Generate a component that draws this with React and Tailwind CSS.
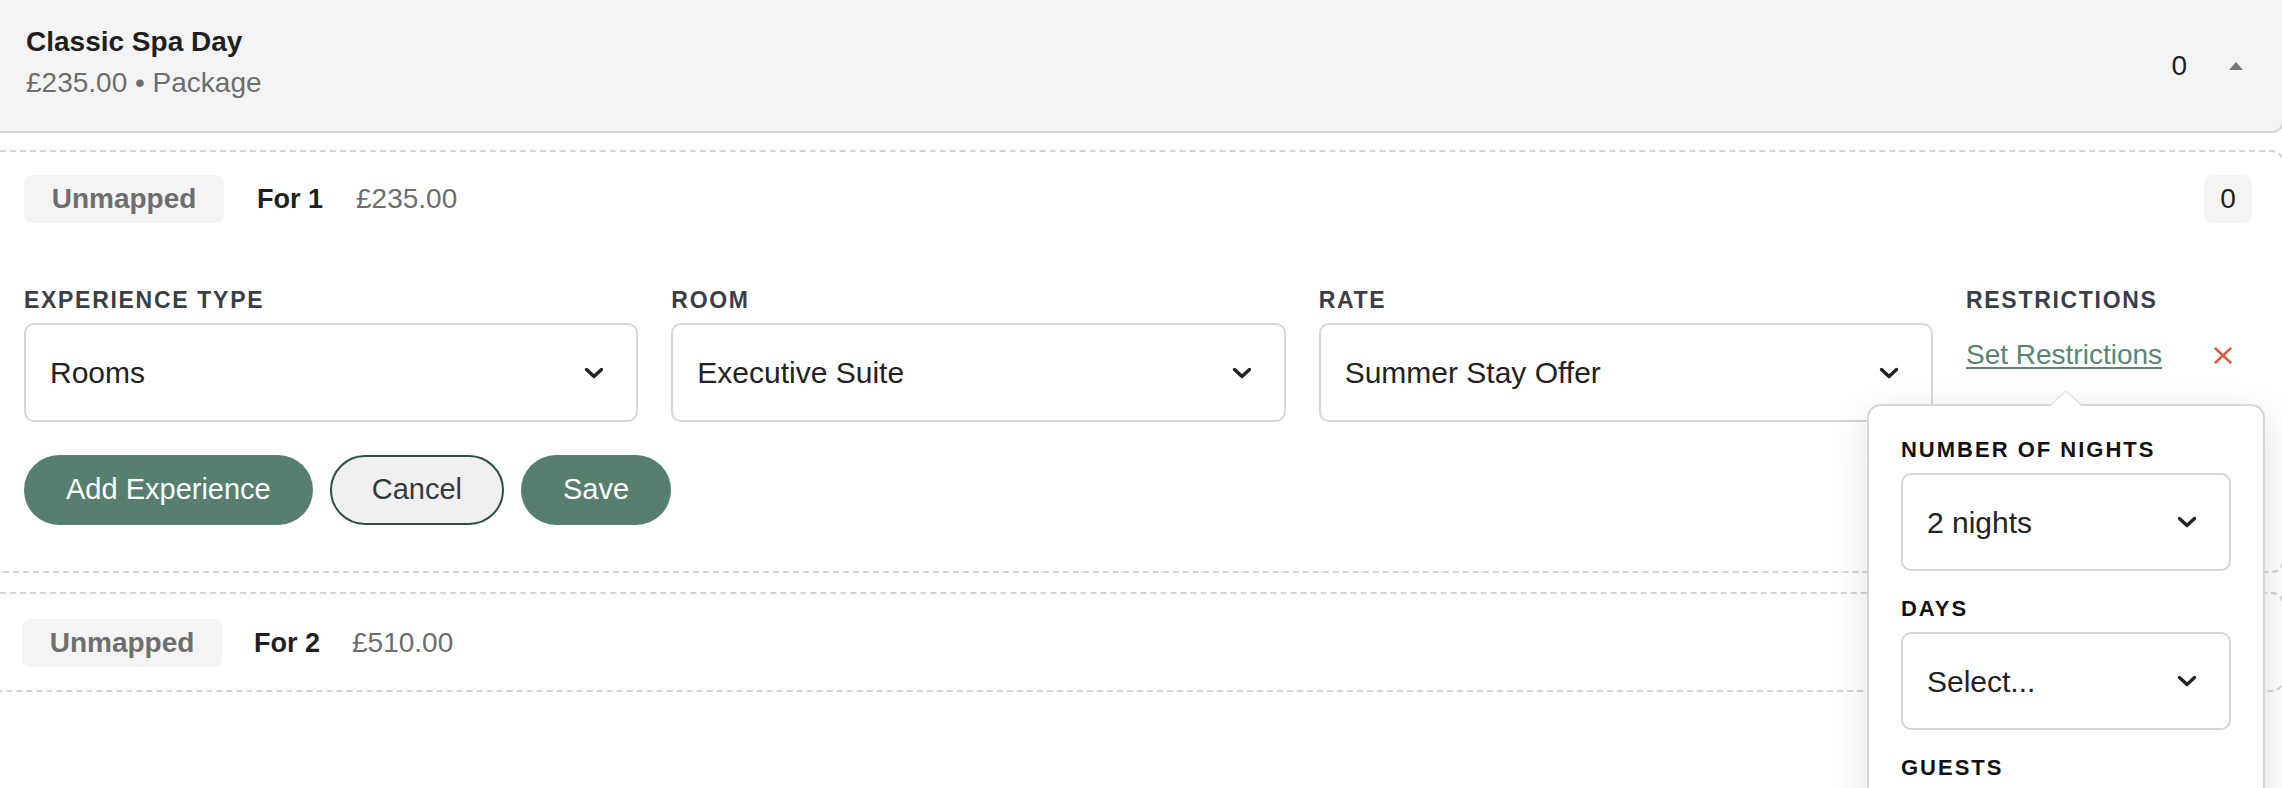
import React from 'react';

const Chevron = () => (
    <svg width="20" height="12" viewBox="0 0 20 12" fill="none">
        <path d="M2.5 2.5 L10 9.5 L17.5 2.5" stroke="#222" strokeWidth="3.4" strokeLinecap="round" strokeLinejoin="round" />
    </svg>
);

const CloseIcon = () => (
    <svg width="18" height="17" viewBox="0 0 18 17" fill="none">
        <path d="M1.5 1.5 L16.5 15.5 M16.5 1.5 L1.5 15.5" stroke="#d85a48" strokeWidth="2.4" strokeLinecap="round" />
    </svg>
);

const Label = ({ children, dark }) => (
    <div className={dark
        ? 'text-[22px] leading-[30px] font-bold uppercase tracking-[2px] text-[#111]'
        : 'text-[23px] leading-[30px] font-bold uppercase tracking-[1.7px] text-[#3a3f47]'}>
        {children}
    </div>
);

const Select = ({ value, tall }) => (
    <div className={`mt-[8px] flex items-center justify-between rounded-[10px] border-2 border-[#d6d6db] bg-white pl-[24px] pr-[32px] text-[30px] text-[#222] ${tall ? 'h-[99px]' : 'h-[98px]'}`}>
        <span>{value}</span>
        <Chevron />
    </div>
);

const Badge = ({ children }) => (
    <span className="flex h-[48px] w-[200px] items-center justify-center rounded-[8px] bg-[#f4f4f4] text-[28px] font-bold text-[#6e6e6e]">
        {children}
    </span>
);

const CountBox = () => (
    <span className="flex h-[48px] w-[48px] items-center justify-center rounded-[8px] bg-[#f4f4f4] text-[28px] text-[#1f1f1f]">0</span>
);

const RestrictionsPopover = () => (
    <div className="absolute left-[-99px] top-[119px] z-10 w-[398px] rounded-[14px] border-2 border-[#d6d6db] bg-white px-[32px] pt-[29px] pb-[30px] shadow-[0_10px_40px_rgba(0,0,0,0.12)]">
        <svg className="absolute left-[181px] top-[-16px]" width="32" height="17" viewBox="0 0 32 17">
            <polygon points="0,17 16,1 32,17" fill="#fff" />
            <path d="M0 15.5 L16 1 L32 15.5" fill="none" stroke="#e2e2e6" strokeWidth="1.2" />
        </svg>
        <Label dark>Number of nights</Label>
        <Select value="2 nights" />
        <div className="mt-[23px]">
            <Label dark>Days</Label>
        </div>
        <Select value="Select..." />
        <div className="mt-[23px]">
            <Label dark>Guests</Label>
        </div>
        <Select value="Select..." />
    </div>
);

const App = () => {
    return (
        <div className="h-[788px] w-full overflow-hidden bg-white font-['Liberation_Sans',Arial,sans-serif]">
            <div className="w-[2284px]">
                {/* Package header */}
                <div className="flex h-[133px] items-center justify-between rounded-br-[12px] border-r-2 border-b-2 border-[#d4d4d8] bg-[#f4f4f4] pl-[26px] pr-[39px]">
                    <div className="self-start pt-[22px]">
                        <div className="text-[28px] leading-[40px] font-bold text-[#1f1f1f]">Classic Spa Day</div>
                        <div className="mt-[1px] text-[28px] leading-[40px] text-[#6e6e6e]">£235.00 • Package</div>
                    </div>
                    <div className="flex items-center gap-[42px]">
                        <span className="text-[28px] text-[#1f1f1f]">0</span>
                        <svg width="14" height="8" viewBox="0 0 14 8">
                            <polygon points="7,0 14,8 0,8" fill="#777" />
                        </svg>
                    </div>
                </div>

                {/* For 1 - expanded */}
                <div className="mt-[17px] rounded-r-[12px] border-y-2 border-r-2 border-dashed border-[#d4d4d8] pl-[24px] pr-[30px] pt-[23px] pb-[46px]">
                    <div className="flex items-center justify-between">
                        <div className="flex items-center gap-[33px]">
                            <Badge>Unmapped</Badge>
                            <span className="text-[27px] font-bold text-[#1f1f1f]">For 1</span>
                            <span className="text-[28px] text-[#6e6e6e]">£235.00</span>
                        </div>
                        <CountBox />
                    </div>

                    <div className="mt-[62px] grid grid-cols-[1fr_1fr_1fr_286px] gap-x-[33px]">
                        <div>
                            <Label>Experience type</Label>
                            <Select value="Rooms" tall />
                        </div>
                        <div>
                            <Label>Room</Label>
                            <Select value="Executive Suite" tall />
                        </div>
                        <div>
                            <Label>Rate</Label>
                            <Select value="Summer Stay Offer" tall />
                        </div>
                        <div className="relative">
                            <Label>Restrictions</Label>
                            <div className="mt-[8px] flex items-center pt-[12px]">
                                <a className="cursor-pointer text-[28px] leading-[40px] text-[#5a8572] underline decoration-2 underline-offset-[3px]">Set Restrictions</a>
                                <button type="button" className="ml-[52px] flex items-center">
                                    <CloseIcon />
                                </button>
                            </div>
                            <RestrictionsPopover />
                        </div>
                    </div>

                    <div className="mt-[33px] flex items-center gap-[17px]">
                        <button type="button" className="h-[70px] rounded-full bg-[#567f6f] px-[42px] text-[29px] text-white">Add Experience</button>
                        <button type="button" className="h-[70px] rounded-full border-2 border-[#2f4d43] bg-[#f0f0f0] px-[40px] text-[29px] text-[#333a40]">Cancel</button>
                        <button type="button" className="h-[70px] rounded-full bg-[#567f6f] px-[42px] text-[29px] text-white">Save</button>
                    </div>
                </div>

                {/* For 2 - collapsed */}
                <div className="mt-[19px] rounded-r-[12px] border-y-2 border-r-2 border-dashed border-[#d4d4d8] pl-[22px] pr-[30px] pt-[25px] pb-[23px]">
                    <div className="flex items-center justify-between">
                        <div className="flex items-center gap-[32px]">
                            <Badge>Unmapped</Badge>
                            <span className="text-[27px] font-bold text-[#1f1f1f]">For 2</span>
                            <span className="text-[28px] text-[#6e6e6e]">£510.00</span>
                        </div>
                        <CountBox />
                    </div>
                </div>
            </div>
        </div>
    );
};

export default App;
